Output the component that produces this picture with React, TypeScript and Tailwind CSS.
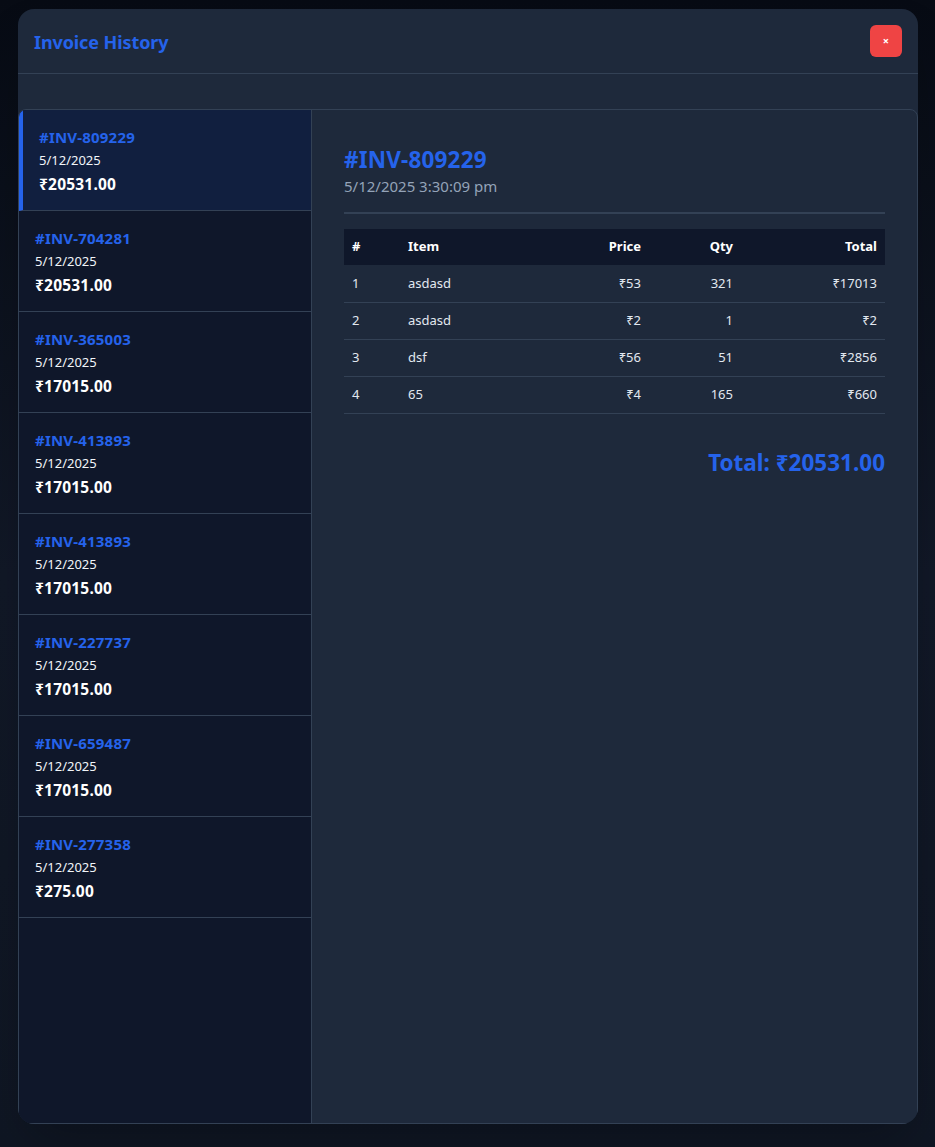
import React, { useState } from 'react';

type Invoice = { id: string; date: string; amount: string };

const invoices: Invoice[] = [
    { id: '#INV-809229', date: '5/12/2025', amount: '₹20531.00' },
    { id: '#INV-704281', date: '5/12/2025', amount: '₹20531.00' },
    { id: '#INV-365003', date: '5/12/2025', amount: '₹17015.00' },
    { id: '#INV-413893', date: '5/12/2025', amount: '₹17015.00' },
    { id: '#INV-413893', date: '5/12/2025', amount: '₹17015.00' },
    { id: '#INV-227737', date: '5/12/2025', amount: '₹17015.00' },
    { id: '#INV-659487', date: '5/12/2025', amount: '₹17015.00' },
    { id: '#INV-277358', date: '5/12/2025', amount: '₹275.00' },
];

const items = [
    { n: 1, name: 'asdasd', price: '₹53', qty: 321, total: '₹17013' },
    { n: 2, name: 'asdasd', price: '₹2', qty: 1, total: '₹2' },
    { n: 3, name: 'dsf', price: '₹56', qty: 51, total: '₹2856' },
    { n: 4, name: '65', price: '₹4', qty: 165, total: '₹660' },
];

export default function App() {
    const [selected, setSelected] = useState(0);

    return (
        <div
            className="min-h-screen bg-gradient-to-b from-[#070b14] via-[#111827] to-[#0f1623] pt-[9px] font-['Noto_Sans','Liberation_Sans',sans-serif]"
        >
            <div className="ml-[18px] w-[900px] h-[1115px] bg-[#1e293b] rounded-2xl overflow-hidden flex flex-col shadow-2xl">
                {/* Header */}
                <div className="h-[65px] shrink-0 flex items-center justify-between pl-4 pr-4 pt-[3px] border-b border-[#334155]">
                    <h2 className="text-[18px] font-bold text-[#2563eb] tracking-[-0.1px]">Invoice History</h2>
                    <button className="w-8 h-8 -mt-[3px] rounded-md bg-[#ef4444] text-white text-[11px] font-bold flex items-center justify-center">
                        ×
                    </button>
                </div>

                <div className="flex-1 pt-[35px] flex flex-col min-h-0">
                    <div className="flex-1 flex border border-[#334155] rounded-t-lg overflow-hidden min-h-0">
                        {/* Sidebar */}
                        <div className="w-[293px] shrink-0 bg-[#0f172a] border-r border-[#334155]">
                            {invoices.map((inv, i) => (
                                <div
                                    key={i}
                                    onClick={() => setSelected(i)}
                                    className={
                                        i === selected
                                            ? 'h-[101px] border-b border-[#334155] border-l-4 border-l-[#2563eb] bg-[#111f3f] pl-4 pt-4 cursor-pointer'
                                            : 'h-[101px] border-b border-[#334155] bg-[#0f172a] pl-4 pt-4 cursor-pointer'
                                    }
                                >
                                    <div className="text-[15px] leading-[22px] font-bold text-[#2563eb] tracking-[0.2px]">{inv.id}</div>
                                    <div className="text-[13px] leading-[24px] text-[#f1f5f9]">{inv.date}</div>
                                    <div className="text-[15.5px] leading-[24px] font-bold text-white tracking-[0.2px]">{inv.amount}</div>
                                </div>
                            ))}
                        </div>

                        {/* Detail */}
                        <div className="flex-1 p-8">
                            <div className="pb-4 border-b-2 border-[#334155] mb-[15px]">
                                <h3 className="text-[22.5px] leading-[32px] pt-[2px] font-bold text-[#2563eb] tracking-[0.2px]">#INV-809229</h3>
                                <p className="text-[15px] leading-[20px] text-[#94a3b8]">5/12/2025 3:30:09 pm</p>
                            </div>

                            <table className="w-full text-[13px] border-collapse">
                                <thead>
                                    <tr className="bg-[#0f172a] text-white h-[36px]">
                                        <th className="w-[56px] px-2 text-left font-bold">#</th>
                                        <th className="px-2 text-left font-bold">Item</th>
                                        <th className="w-[90px] px-2 text-right font-bold">Price</th>
                                        <th className="w-[92px] px-2 text-right font-bold">Qty</th>
                                        <th className="w-[144px] px-2 text-right font-bold">Total</th>
                                    </tr>
                                </thead>
                                <tbody>
                                    {items.map((it) => (
                                        <tr key={it.n} className="h-[37px] border-b border-[#334155] text-[#e2e8f0]">
                                            <td className="px-2 text-left">{it.n}</td>
                                            <td className="px-2 text-left">{it.name}</td>
                                            <td className="px-2 text-right">{it.price}</td>
                                            <td className="px-2 text-right">{it.qty}</td>
                                            <td className="px-2 text-right">{it.total}</td>
                                        </tr>
                                    ))}
                                </tbody>
                            </table>

                            <div className="mt-[32px] text-right text-[22.5px] font-bold text-[#2563eb]">
                                Total: ₹20531.00
                            </div>
                        </div>
                    </div>
                </div>
            </div>
        </div>
    );
}
